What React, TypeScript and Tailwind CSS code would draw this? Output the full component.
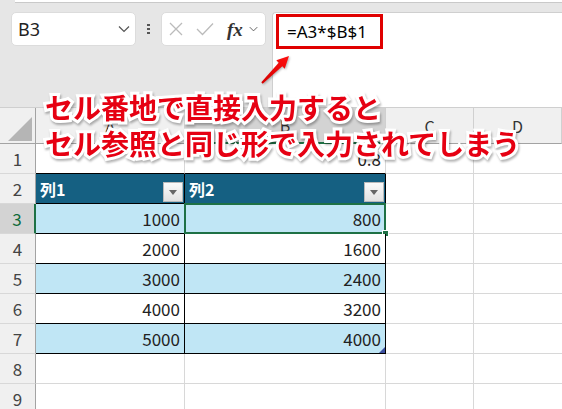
import React from "react"

const COLS = [
  { id: "A", w: "w-[149px]" },
  { id: "B", w: "w-[201px]" },
  { id: "C", w: "w-[88px]" },
  { id: "D", w: "flex-1" },
]

const DATA: [number, string, string][] = [
  [3, "1000", "800"],
  [4, "2000", "1600"],
  [5, "3000", "2400"],
  [6, "4000", "3200"],
  [7, "5000", "4000"],
]

const sheetFont = "font-['Noto_Sans_CJK_JP','Noto_Sans',sans-serif]"

function Chevron({ className }: { className?: string }) {
  return (
    <svg viewBox="0 0 12 8" className={className} fill="none" stroke="#555" strokeWidth="1.2">
      <path d="M1 1.5 L6 6.5 L11 1.5" />
    </svg>
  )
}

function FilterButton() {
  return (
    <div className="self-end mb-[1px] mr-[1px] w-[20px] h-[20px] flex items-center justify-center bg-gradient-to-b from-[#fafafa] to-[#e2e2e2] border border-[#b9b9b9]">
      <svg viewBox="0 0 8 5" className="w-[8px] h-[5px]">
        <path d="M0 0 L8 0 L4 5 Z" fill="#666" />
      </svg>
    </div>
  )
}

function RowHeader({ n, selected }: { n: number; selected?: boolean }) {
  return (
    <div
      className={`w-[36px] shrink-0 flex items-center justify-center text-[17px] border-b border-[#d8d8d8] ${
        selected
          ? "bg-[#d3d3d3] text-[#0f6b3a] border-r-2 border-r-[#1e7145]"
          : "bg-[#f0f0f0] text-[#444] border-r border-r-[#a3a3a3]"
      }`}
    >
      {n}
    </div>
  )
}

export default function App() {
  return (
    <div className={`relative w-[562px] h-[409px] overflow-hidden bg-white ${sheetFont}`}>
      {/* ribbon / formula area */}
      <div className="h-[107px] bg-[#e6e6e6] flex flex-col">
        <div className="h-[3px] ml-[15px] bg-white border-b border-[#c9c9c9]" />
        <div className="flex flex-1 pt-[9px]">
          <div className="ml-[11px] mt-0 w-[125px] h-[34px] bg-white rounded-[5px] border border-[#dcdcdc] flex items-center justify-between pl-[6px] pr-[5px]">
            <span className="text-[18px] text-[#222] font-['Noto_Sans',sans-serif]">B3</span>
            <Chevron className="w-[12px] h-[8px]" />
          </div>
          <div className="ml-[10px] w-[4px] h-[34px] flex flex-col items-center justify-center gap-[2px]">
            <span className="w-[3px] h-[2px] bg-[#555]" />
            <span className="w-[3px] h-[2px] bg-[#555]" />
            <span className="w-[3px] h-[2px] bg-[#555]" />
          </div>
          <div className="ml-[11px] w-[105px] h-[34px] bg-white rounded-[5px] border border-[#dcdcdc] flex items-center pl-[7px] pr-[3px]">
            <svg viewBox="0 0 14 14" className="w-[14px] h-[14px]" stroke="#bbb" strokeWidth="1.3">
              <path d="M1 1 L13 13 M13 1 L1 13" />
            </svg>
            <svg viewBox="0 0 18 14" className="ml-[13px] w-[18px] h-[14px]" fill="none" stroke="#bbb" strokeWidth="1.3">
              <path d="M1 7 L6.5 12.5 L17 1.5" />
            </svg>
            <span className="ml-[13px] text-[19px] italic font-bold text-[#333] font-['Liberation_Serif',serif] leading-none">
              fx
            </span>
            <Chevron className="ml-[6px] w-[9px] h-[6px]" />
          </div>
          <div className="ml-[6px] flex-1 bg-white border-l border-t border-[#cfcfcf] rounded-tl-[4px] pl-[3px] pt-[1px]">
            <div className="w-[107px] h-[35px] border-[3px] border-[#e00000] flex items-center pl-[8px]">
              <span className="text-[17px] text-black font-['Noto_Sans',sans-serif]">=A3*$B$1</span>
            </div>
          </div>
        </div>
      </div>

      {/* column headers */}
      <div className="flex h-[37px] bg-[#f0f0f0] border-t border-[#cfcfcf]">
        <div className="w-[36px] shrink-0 border-r border-b border-[#a3a3a3] flex items-end justify-end pr-[3px] pb-[2px]">
          <svg viewBox="0 0 24 24" className="w-[24px] h-[24px]">
            <path d="M24 0 L24 24 L0 24 Z" fill="#b5b5b5" />
          </svg>
        </div>
        {COLS.map((c) => (
          <div
            key={c.id}
            className={`${c.w} shrink-0 flex items-center justify-center text-[16px] text-[#333] border-r border-[#d0d0d0] ${
              c.id === "B"
                ? "bg-[#d3d3d3] border-b-2 border-b-[#1e7145] text-[#0f6b3a]"
                : "border-b border-b-[#a3a3a3]"
            }`}
          >
            {c.id}
          </div>
        ))}
      </div>

      {/* row 1 */}
      <div className="flex h-[30px]">
        <RowHeader n={1} />
        <div className="w-[149px] shrink-0 border-r border-[#d8d8d8] border-b border-b-black" />
        <div className="w-[201px] shrink-0 border-r border-[#d8d8d8] border-b border-b-black flex items-center justify-end pr-[4px] text-[17px] text-[#222]">
          0.8
        </div>
        <div className="w-[88px] shrink-0 border-r border-b border-[#d8d8d8]" />
        <div className="flex-1 border-b border-[#d8d8d8]" />
      </div>

      {/* row 2 : table header */}
      <div className="flex h-[30px]">
        <RowHeader n={2} />
        <div className="w-[149px] shrink-0 bg-[#156082] border-r border-b border-black flex items-center justify-between pl-[4px]">
          <span className="text-white font-bold text-[16px]">列1</span>
          <FilterButton />
        </div>
        <div className="w-[201px] shrink-0 bg-[#156082] border-r border-b border-black flex items-center justify-between pl-[4px]">
          <span className="text-white font-bold text-[16px]">列2</span>
          <FilterButton />
        </div>
        <div className="w-[88px] shrink-0 border-r border-b border-[#d8d8d8]" />
        <div className="flex-1 border-b border-[#d8d8d8]" />
      </div>

      {/* data rows */}
      {DATA.map(([n, a, b], i) => {
        const band = i % 2 === 0 ? "bg-[#c0e6f5]" : "bg-white"
        return (
          <div key={n} className="flex h-[30px]">
            <RowHeader n={n} selected={n === 3} />
            <div className={`w-[149px] shrink-0 ${band} border-r border-b border-black flex items-center justify-end pr-[4px] text-[17px] text-[#222]`}>
              {a}
            </div>
            <div className={`relative w-[201px] shrink-0 ${band} border-r border-b border-black flex items-center justify-end pr-[4px] text-[17px] text-[#222]`}>
              {b}
              {n === 3 && (
                <>
                  <div className="absolute -left-[1px] -top-[1px] -right-[1px] -bottom-[1px] border-2 border-[#1e7145]" />
                  <div className="absolute -right-[4px] -bottom-[4px] w-[7px] h-[7px] bg-[#1e7145] border border-white" />
                </>
              )}
              {n === 7 && (
                <svg viewBox="0 0 6 6" className="absolute right-0 bottom-0 w-[6px] h-[6px]">
                  <path d="M6 0 L6 6 L0 6 Z" fill="#3c4fa0" />
                </svg>
              )}
            </div>
            <div className="w-[88px] shrink-0 border-r border-b border-[#d8d8d8]" />
            <div className="flex-1 border-b border-[#d8d8d8]" />
          </div>
        )
      })}

      {[8, 9].map((n) => (
        <div key={n} className="flex h-[30px]">
          <RowHeader n={n} />
          <div className="w-[149px] shrink-0 border-r border-b border-[#d8d8d8]" />
          <div className="w-[201px] shrink-0 border-r border-b border-[#d8d8d8]" />
          <div className="w-[88px] shrink-0 border-r border-b border-[#d8d8d8]" />
          <div className="flex-1 border-b border-[#d8d8d8]" />
        </div>
      ))}

      {/* annotation */}
      <svg
        viewBox="0 0 40 40"
        className="absolute left-[255px] top-[50px] w-[40px] h-[40px] [filter:drop-shadow(1px_1px_1px_rgba(0,0,0,0.3))]"
      >
        <defs>
          <linearGradient id="arr" x1="0" y1="1" x2="1" y2="0">
            <stop offset="0" stopColor="#d40000" />
            <stop offset="1" stopColor="#ff1010" />
          </linearGradient>
        </defs>
        <polygon
          points="6.3,32.3 7.7,33.7 27.3,16.3 29.7,18.7 34,6 21.3,10.3 23.7,12.7"
          fill="url(#arr)"
        />
      </svg>
      <div className="absolute left-[45px] top-[89px] text-[28px] leading-[36px] font-bold text-[#e60012] whitespace-nowrap [paint-order:stroke_fill] [-webkit-text-stroke:6px_#fff] [filter:drop-shadow(1px_2px_1px_rgba(0,0,0,0.3))]">
        <div>セル番地で直接入力すると</div>
        <div>セル参照と同じ形で入力されてしまう</div>
      </div>
    </div>
  )
}
